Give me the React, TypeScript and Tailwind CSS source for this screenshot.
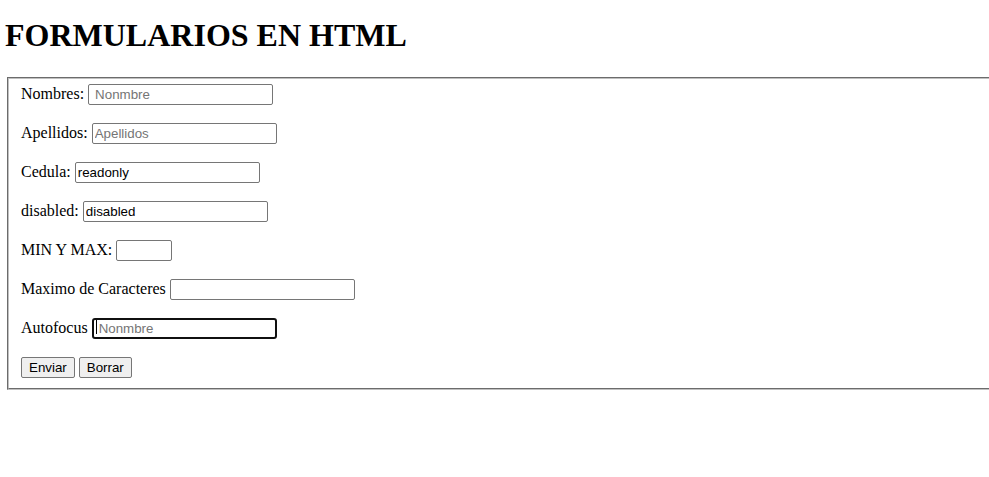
import React from "react";

const inputCls =
  "h-[21px] w-[185px] rounded-[2px] border border-[#767676] bg-white px-[2px] align-baseline text-[13.33px] text-black placeholder:text-[#757575] outline-none [font-family:'Liberation_Sans',Arial,sans-serif]";

const btnCls =
  "h-[21px] rounded-[2px] border border-[#767676] bg-[#efefef] px-[7px] align-baseline text-[13.33px] leading-none text-black [font-family:'Liberation_Sans',Arial,sans-serif]";

function Row({ children }: { children: React.ReactNode }) {
  return <div className="h-[23px] leading-[23px] whitespace-nowrap">{children}</div>;
}

export default function App() {
  return (
    <div className="min-h-[477px] w-[989px] overflow-hidden bg-white px-[5px] text-[16px] text-black [font-family:'Liberation_Serif','Times_New_Roman',serif]">
      <h1 className="mt-[17px] mb-[23px] h-[37px] text-[32px] leading-[37px] font-bold">FORMULARIOS EN HTML</h1>
      <form
        className="ml-[2px] -mr-[40px] flex flex-col gap-[16px] border-2 border-[#c0c0c0] px-[12px] pt-[3px] pb-[10px] [border-style:groove]"
        onSubmit={(e) => e.preventDefault()}
      >
        <Row>
          Nombres: <input className={inputCls + " !pl-[6px]"} placeholder="Nonmbre" />
        </Row>
        <Row>
          Apellidos: <input className={inputCls} placeholder="Apellidos" />
        </Row>
        <Row>
          Cedula: <input className={inputCls} defaultValue="readonly" readOnly />
        </Row>
        <Row>
          disabled: <input className={inputCls} defaultValue="disabled" />
        </Row>
        <Row>
          MIN Y MAX: <input type="number" className={inputCls + " !w-[56px]"} />
        </Row>
        <Row>
          Maximo de Caracteres <input className={inputCls} maxLength={10} />
        </Row>
        <Row>
          Autofocus{" "}
          <span className="relative inline-block align-baseline">
            <input
              className="h-[21px] w-[185px] rounded-[3px] border-2 border-[#101010] bg-white px-[2px] pl-[5px] align-baseline text-[13.33px] text-black placeholder:text-[#757575] outline-none [font-family:'Liberation_Sans',Arial,sans-serif]"
              placeholder="Nonmbre"
            />
            <span className="absolute top-[4px] left-[4px] h-[14px] w-px bg-black" />
          </span>
        </Row>
        <Row>
          <button type="submit" className={btnCls}>Enviar</button>{" "}
          <button type="reset" className={btnCls}>Borrar</button>
        </Row>
      </form>
    </div>
  );
}
